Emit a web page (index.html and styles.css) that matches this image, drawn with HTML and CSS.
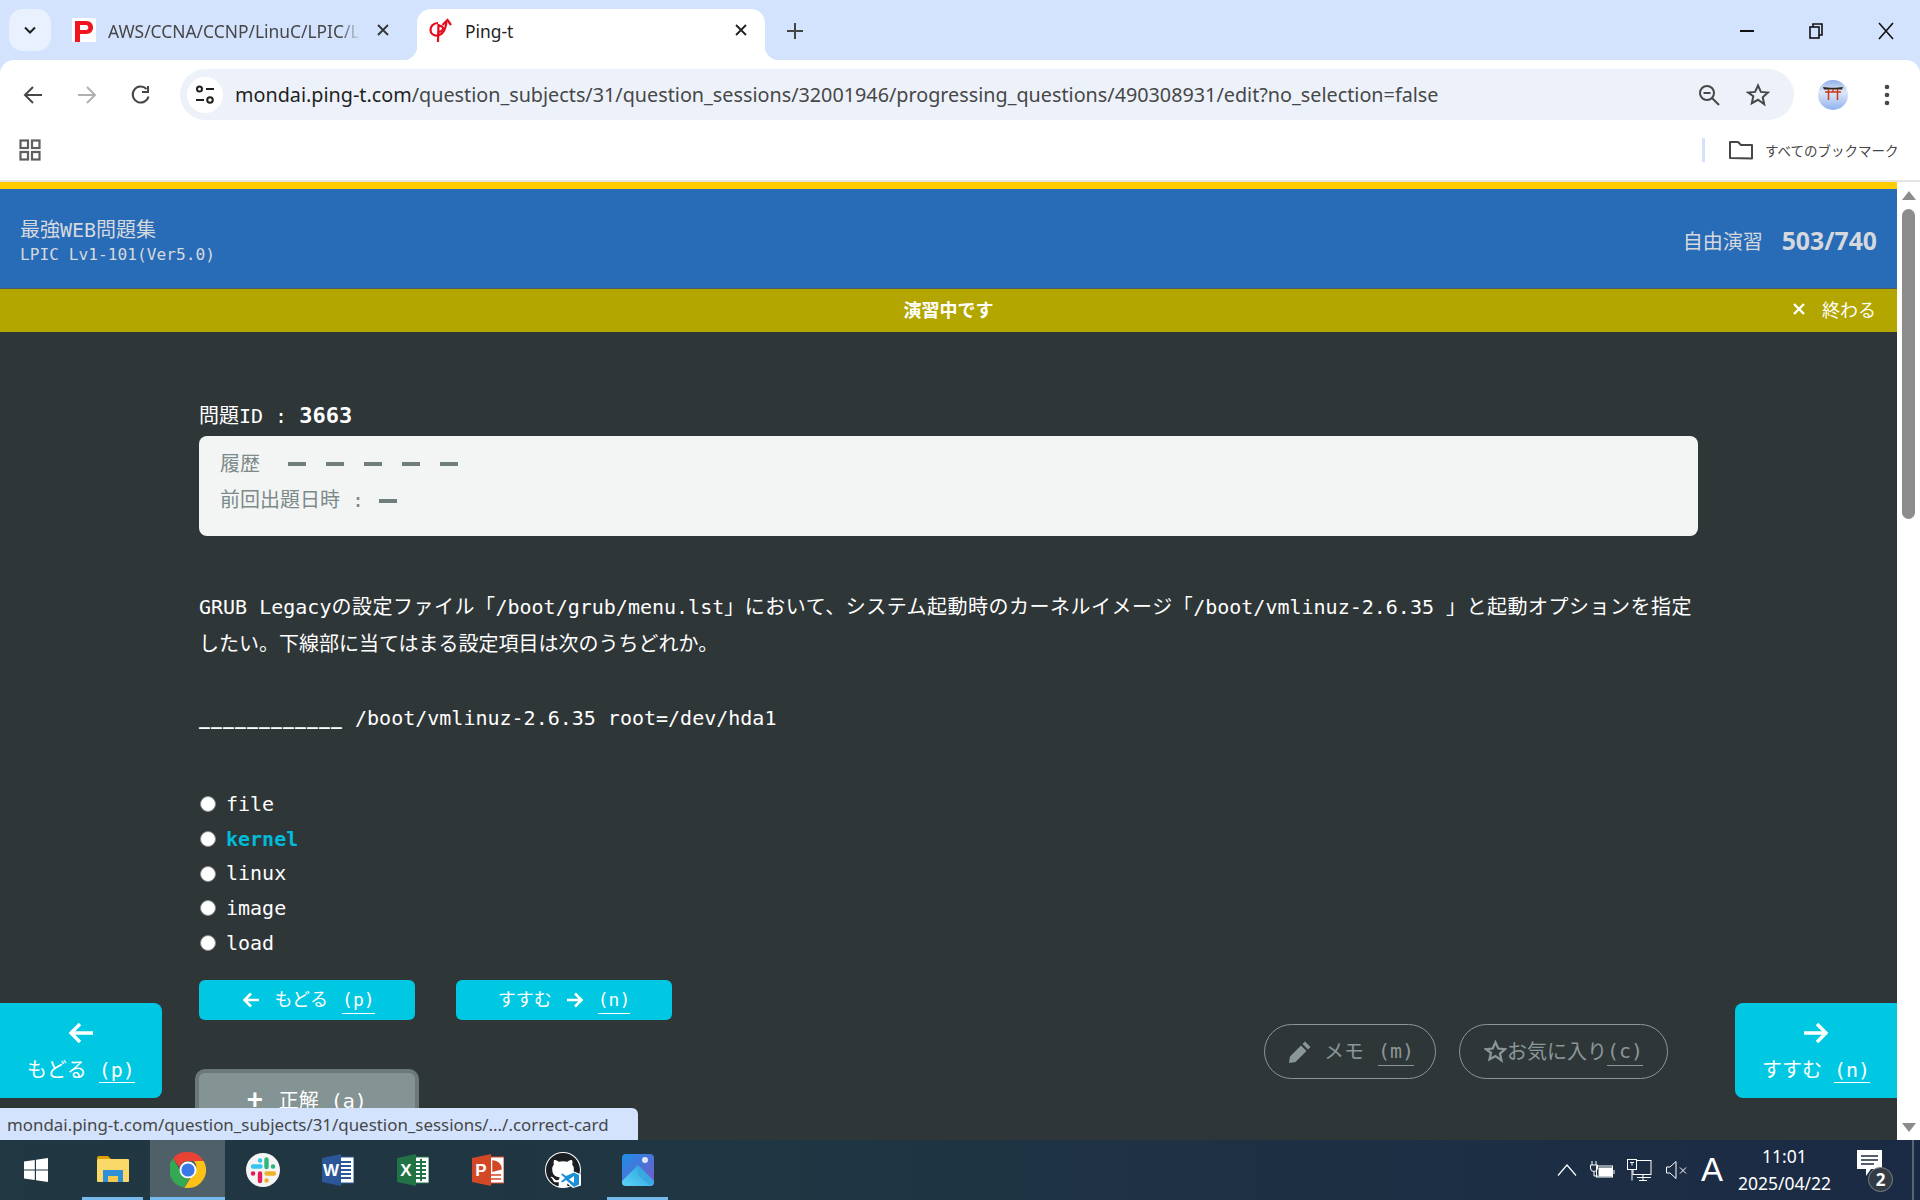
FILE: index.html
```html
<!DOCTYPE html>
<html lang="ja">
<head>
    <meta charset="utf-8">
    <title>Ping-t</title>
    <link rel="stylesheet" href="styles.css">
</head>
<body>
<div class="tabstrip">
    <div class="tab-menu">
        <svg width="16" height="16" viewBox="0 0 16 16"><path d="M3 5.500l5 5 5-5" fill="none" stroke="#1f1f1f" stroke-width="2"/></svg>
    </div>
    <div class="tab">
        <svg class="favicon" width="24" height="24" viewBox="0 0 24 24"><rect width="24" height="24" fill="#fff"/><path d="M3 3h11c5 0 7 3 7 6.500S19 16 14 16H8v8H3zM8 7v5h6c1.600 0 2.300-1.100 2.300-2.500S15.600 7 14 7z" fill="#f0141e"/></svg>
        <span class="tab-title fade">AWS/CCNA/CCNP/LinuC/LPIC/L</span>
        <svg class="tab-close" width="14" height="14" viewBox="0 0 14 14"><path d="M2 2l10 10M12 2L2 12" stroke="#333" stroke-width="1.800"/></svg>
    </div>
    <div class="tab active">
        <svg class="favicon" width="24" height="24" viewBox="0 0 24 24" fill="none" stroke="#e60e1e" stroke-width="2.200"><path d="M9 5C4 5 1.500 8.500 1.500 12c0 3.500 3 6 7 5.500 5-.5 8-5 9-14"/><path d="M13.500 7l5-5L22 7"/><path d="M9.500 6L9 24"/><path d="M9.500 8c3-.5 5 1 4.500 3-.5 2-3 3-4.500 2.500"/></svg>
        <span class="tab-title">Ping-t</span>
        <svg class="tab-close" width="14" height="14" viewBox="0 0 14 14"><path d="M2 2l10 10M12 2L2 12" stroke="#1f1f1f" stroke-width="1.800"/></svg>
    </div>
    <svg class="new-tab" width="18" height="18" viewBox="0 0 18 18"><path d="M9 1v16M1 9h16" stroke="#444" stroke-width="2"/></svg>
    <div class="window-controls">
        <svg width="16" height="16" viewBox="0 0 16 16"><path d="M1 8h14" stroke="#111" stroke-width="2"/></svg>
        <svg width="16" height="16" viewBox="0 0 16 16" fill="none" stroke="#111" stroke-width="1.600"><rect x="2" y="4" width="9" height="11"/><path d="M5 4V1h9v11h-3"/></svg>
        <svg width="18" height="18" viewBox="0 0 18 18"><path d="M2 1l14 16M16 1L2 17" stroke="#111" stroke-width="1.600"/></svg>
    </div>
</div>

<div class="toolbar">
    <svg class="nav-btn" width="22" height="22" viewBox="0 0 22 22" fill="none" stroke="#474747" stroke-width="2"><path d="M20 11H3M11 3l-8 8 8 8"/></svg>
    <svg class="nav-btn" width="22" height="22" viewBox="0 0 22 22" fill="none" stroke="#b0b0b0" stroke-width="2"><path d="M2 11h17M11 3l8 8-8 8"/></svg>
    <svg class="nav-btn" width="22" height="22" viewBox="0 0 22 22" fill="none" stroke="#474747" stroke-width="2"><path d="M18.500 12.500A8 8 0 1 1 16.500 5"/><path d="M18 2v6h-6" /></svg>
    <div class="address">
        <div class="site-info">
            <svg width="20" height="20" viewBox="0 0 20 20" fill="none" stroke="#1f1f1f" stroke-width="2"><circle cx="4.500" cy="4" r="2.500"/><path d="M11 4h8M1 15h8"/><circle cx="15" cy="15" r="2.800"/></svg>
        </div>
        <span class="url"><span class="host">mondai.ping-t.com</span>/question_subjects/31/question_sessions/32001946/progressing_questions/490308931/edit?no_selection=false</span>
        <svg class="addr-zoom" width="22" height="22" viewBox="0 0 22 22" fill="none" stroke="#474747" stroke-width="2"><circle cx="9" cy="9" r="7"/><path d="M5.500 9h7M14 14l7 7"/></svg>
        <svg class="addr-star" width="24" height="24" viewBox="0 0 24 24" fill="none" stroke="#474747" stroke-width="2"><path d="M12 2.500l2.900 6.400 7 .7-5.200 4.700 1.500 6.900L12 16.800l-6.200 3.400 1.500-6.900L2.100 9.600l7-.7z"/></svg>
    </div>
    <svg class="avatar" width="30" height="30" viewBox="0 0 30 30">
        <defs><linearGradient id="sky" x1="0" y1="0" x2="0" y2="1"><stop offset="0" stop-color="#8fb0e6"/><stop offset=".4" stop-color="#dfe8f7"/><stop offset="1" stop-color="#8fb2ee"/></linearGradient></defs>
        <circle cx="15" cy="15" r="15" fill="url(#sky)"/>
        <path d="M5 7c6 1 14 1 20 0l-1 2.500H6z" fill="#33251f"/>
        <path d="M7 12h16M10.500 9v11M19.500 9v11M15 9v3" stroke="#c63a1d" stroke-width="1.500"/>
    </svg>
    <svg class="menu-dots" width="6" height="22" viewBox="0 0 6 22" fill="#474747"><circle cx="3" cy="3" r="2.300"/><circle cx="3" cy="11" r="2.300"/><circle cx="3" cy="19" r="2.300"/></svg>
</div>

<div class="bookmarks">
    <svg width="22" height="22" viewBox="0 0 22 22" fill="none" stroke="#5f5f5f" stroke-width="2.200"><rect x="1.500" y="1.500" width="7.500" height="7.500"/><rect x="13" y="1.500" width="7.500" height="7.500"/><rect x="1.500" y="13" width="7.500" height="7.500"/><rect x="13" y="13" width="7.500" height="7.500"/></svg>
    <div class="bm-right">
        <span class="bm-divider"></span>
        <svg width="24" height="20" viewBox="0 0 24 20" fill="none" stroke="#474747" stroke-width="2"><path d="M1 18V2h8l3 3h11v13.500z" stroke-linejoin="round"/></svg>
        <span class="bm-label">すべてのブックマーク</span>
    </div>
</div>

<div class="page">
    <div class="site">
        <header class="site-header">
            <div>
                <div class="site-title">最強WEB問題集</div>
                <div class="site-sub">LPIC Lv1-101(Ver5.0)</div>
            </div>
            <div class="progress">
                <span class="progress-mode">自由演習</span>
                <span class="progress-count">503/740</span>
            </div>
        </header>
        <div class="notice">
            <span class="notice-text">演習中です</span>
            <span class="notice-end">
                <svg width="14" height="14" viewBox="0 0 14 14"><path d="M2 2l10 10M12 2L2 12" stroke="#fff" stroke-width="2.400"/></svg>
                終わる
            </span>
        </div>
        <main class="question">
            <div class="question-id">問題ID : <b>3663</b></div>
            <div class="history">
                <div class="history-row">履歴 <span class="history-marks"><i></i><i></i><i></i><i></i><i></i></span></div>
                <div class="history-row">前回出題日時 : <span class="history-marks"><i></i></span></div>
            </div>
            <p class="question-text">GRUB Legacy<span class="jp">の設定ファイル「</span>/boot/grub/menu.lst<span class="jp">」において、システム起動時のカーネルイメージ「</span>/boot/vmlinuz-2.6.35 <span class="jp">」と起動オプションを指定</span>したい。下線部に当てはまる設定項目は次のうちどれか。<br><br><span class="blank">____________</span> /boot/vmlinuz-2.6.35 root=/dev/hda1</p>
            <ul class="choices">
                <li><span class="radio"></span>file</li>
                <li class="is-answer"><span class="radio"></span>kernel</li>
                <li><span class="radio"></span>linux</li>
                <li><span class="radio"></span>image</li>
                <li><span class="radio"></span>load</li>
            </ul>
            <div class="pager">
                <a class="btn btn-prev">
                    <svg width="18" height="16" viewBox="0 0 18 16" fill="none" stroke="#fff" stroke-width="2.600"><path d="M17 8H3M9 1.500L2.500 8 9 14.500"/></svg>
                    <span class="btn-label">もどる</span><span class="key">(p)</span>
                </a>
                <a class="btn">
                    <span class="btn-label">すすむ</span>
                    <svg width="18" height="16" viewBox="0 0 18 16" fill="none" stroke="#fff" stroke-width="2.600"><path d="M1 8h14M9 1.500L15.500 8 9 14.500"/></svg>
                    <span class="key">(n)</span>
                </a>
            </div>
            <div class="correct-card"><span class="correct-plus">+</span>正解 <span>(a)</span></div>
        </main>
    </div>
    <div class="scrollbar">
        <span class="scroll-up"></span>
        <span class="scroll-thumb"></span>
        <span class="scroll-down"></span>
    </div>

    <a class="float-nav float-prev">
        <svg width="26" height="22" viewBox="0 0 26 22" fill="none" stroke="#fff" stroke-width="3.400"><path d="M25 11H4M12 2l-9 9 9 9"/></svg>
        <span class="float-label">もどる <span class="key">(p)</span></span>
    </a>
    <a class="float-nav float-next">
        <svg width="26" height="22" viewBox="0 0 26 22" fill="none" stroke="#fff" stroke-width="3.400"><path d="M1 11h21M14 2l9 9-9 9"/></svg>
        <span class="float-label">すすむ <span class="key">(n)</span></span>
    </a>
    <a class="pill pill-memo">
        <svg width="24" height="24" viewBox="0 0 24 24" fill="#8b9797"><path d="M17 1.500l5.500 5.500-2.500 2.500L14.500 4zM13 5.500L18.500 11 7.500 22 1 23l1-6.500z"/></svg>
        <span class="pill-text">メモ</span><span class="key">(m)</span>
    </a>
    <a class="pill pill-fav">
        <svg width="23" height="23" viewBox="0 0 24 24" fill="none" stroke="#8b9797" stroke-width="2.400"><path d="M12 2.500l2.900 6.400 7 .7-5.200 4.700 1.500 6.900L12 16.800l-6.200 3.400 1.500-6.900L2.100 9.600l7-.7z"/></svg>
        <span>お気に入り</span><span class="key">(c)</span>
    </a>
    <div class="status-bubble">mondai.ping-t.com/question_subjects/31/question_sessions/.../.correct-card</div>
</div>

<div class="taskbar">
    <div class="start">
        <svg width="24" height="24" viewBox="0 0 24 24" fill="#fff"><path d="M0 3.500l10.800-1.500v9.500H0zM12 1.800L24 0v11.500H12zM0 12.500h10.800V22L0 20.500zM12 12.500h12V24l-12-1.800z"/></svg>
    </div>
    <div class="task running">
        <svg width="32" height="28" viewBox="0 0 32 28"><path d="M0 2a2 2 0 0 1 2-2h9l3 3H0z" fill="#e0a000"/><rect y="3" width="32" height="23" rx="1" fill="#fbd968"/><path d="M6 14h20v12h-5v-6H11v6H6z" fill="#2f8fd8"/><rect x="11" y="20" width="10" height="6" fill="#f2c94c"/></svg>
    </div>
    <div class="task running active">
        <svg width="36" height="36" viewBox="0 0 36 36">
            <path d="M18 0a18 18 0 0 1 15.600 9H18a9 9 0 0 0-8.500 6L3 6.500A18 18 0 0 1 18 0z" fill="#ea4335"/>
            <path d="M3 6.500l7.700 13.200A9 9 0 0 0 19 27l-4.600 8.600A18 18 0 0 1 3 6.500z" fill="#34a853"/>
            <path d="M33.600 9A18 18 0 0 1 18 36h-3.600l8-13.500A9 9 0 0 0 24 9z" fill="#fbc116"/>
            <circle cx="18" cy="18" r="8.500" fill="#fff"/><circle cx="18" cy="18" r="6.600" fill="#3b78e7"/>
        </svg>
    </div>
    <div class="task">
        <svg width="34" height="34" viewBox="0 0 34 34">
            <circle cx="17" cy="17" r="17" fill="#f4f4f4"/>
            <g fill="none" stroke-linecap="round" stroke-width="4.400">
                <path d="M7 13.500h7.500M14 7.500h.1" stroke="#36c5f0"/>
                <path d="M20.500 6.500v7.500M27 13.500h.1" stroke="#2eb67d"/>
                <path d="M20.500 20.500H28M20.500 27.500h.1" stroke="#ecb22e"/>
                <path d="M14 20.500V28M7 20.500h.1" stroke="#e01e5a"/>
            </g>
        </svg>
    </div>
    <div class="task">
        <svg width="32" height="32" viewBox="0 0 32 32">
            <rect x="12" y="3" width="20" height="26" fill="#fff" stroke="#2b5797"/>
            <path d="M19 8h10M19 12h10M19 16h10M19 20h10M19 24h10" stroke="#2b5797" stroke-width="2"/>
            <path d="M0 4L19 0v32L0 28z" fill="#2b579a"/>
            <text x="9" y="22" class="office-letter">W</text>
        </svg>
    </div>
    <div class="task">
        <svg width="32" height="32" viewBox="0 0 32 32">
            <rect x="12" y="3" width="20" height="26" fill="#fff" stroke="#217346"/>
            <path d="M19 8h10M19 12h10M19 16h10M19 20h10M19 24h10M24 5v22" stroke="#217346" stroke-width="2"/>
            <path d="M0 4L19 0v32L0 28z" fill="#217346"/>
            <text x="9" y="22" class="office-letter">X</text>
        </svg>
    </div>
    <div class="task">
        <svg width="32" height="32" viewBox="0 0 32 32">
            <rect x="12" y="3" width="20" height="26" fill="#fff" stroke="#d24726"/>
            <path d="M21 17V7a8 8 0 0 1 8 8zM19 21h10M19 25h10" fill="#d24726" stroke="#d24726" stroke-width="1.500"/>
            <path d="M0 4L19 0v32L0 28z" fill="#d24726"/>
            <text x="9" y="22" class="office-letter">P</text>
        </svg>
    </div>
    <div class="task task-github">
        <svg width="36" height="36" viewBox="0 0 36 36">
            <circle cx="18" cy="18" r="18" fill="#fff"/>
            <path transform="translate(1 1) scale(2.125)" fill="#1b1f23" d="M8 0C3.580 0 0 3.580 0 8c0 3.540 2.290 6.530 5.470 7.590.4.070.55-.170.55-.380 0-.190-.010-.820-.010-1.490-2.010.370-2.530-.490-2.690-.940-.090-.230-.480-.940-.820-1.130-.280-.150-.680-.520-.010-.530.630-.010 1.080.580 1.230.820.720 1.210 1.870.870 2.330.660.070-.520.280-.870.510-1.070-1.780-.200-3.640-.890-3.640-3.950 0-.870.310-1.590.820-2.150-.080-.200-.360-1.020.080-2.120 0 0 .670-.210 2.200.820.640-.180 1.320-.270 2-.270.680 0 1.360.090 2 .270 1.530-1.040 2.200-.820 2.200-.820.440 1.100.160 1.920.080 2.120.510.560.820 1.270.820 2.150 0 3.070-1.870 3.750-3.650 3.950.290.250.540.730.540 1.480 0 1.070-.010 1.930-.010 2.200 0 .210.150.460.550.380A8.013 8.013 0 0 0 16 8c0-4.420-3.580-8-8-8z"/>
            <path d="M28 19l8 3.500v11L28 36 19 29l-3 2-3-2 5-4-5-4 3-2 3 2z" fill="#fff"/>
            <path d="M29 20.500l5 2.500v9.500l-5 2.500-8-7-3.500 2.500-1.500-1 4-3.500-4-3.500 1.500-1 3.500 2.500zM29 24l-5 3.500 5 3.500z" fill="#1b8fd8"/>
        </svg>
    </div>
    <div class="task running">
        <svg width="32" height="32" viewBox="0 0 32 32">
            <defs>
                <linearGradient id="photo" x1="0" y1="0" x2="1" y2="1"><stop offset="0" stop-color="#1c8fe8"/><stop offset="1" stop-color="#7a55c7"/></linearGradient>
                <linearGradient id="hill" x1="0" y1="1" x2="1" y2="0"><stop offset="0" stop-color="#5fd4f5"/><stop offset="1" stop-color="#1f9be0"/></linearGradient>
            </defs>
            <rect width="32" height="32" rx="4" fill="url(#photo)"/>
            <circle cx="23" cy="6" r="3" fill="#dfe7f5"/>
            <path d="M0 27L16 11l16 16v1a4 4 0 0 1-4 4H4a4 4 0 0 1-4-4z" fill="url(#hill)"/>
            <path d="M16 11l16 16v1l-4 4-12-11z" fill="#3ba3dc" opacity=".7"/>
        </svg>
    </div>
    <div class="tray">
        <svg width="20" height="12" viewBox="0 0 20 12" fill="none" stroke="#fff" stroke-width="1.200"><path d="M1 11.500L10 1l9 10.500"/></svg>
        <svg width="25" height="20" viewBox="0 0 25 20" fill="none" stroke="#fff"><path d="M2 1v4M6 1v4M.5 5h7v3a3.500 3.500 0 0 1-7 0zM4 12v4H8"/><rect x="6.500" y="6" width="16" height="11"/><rect x="9" y="8" width="13" height="8" fill="#fff"/><path d="M24 10v4"/></svg>
        <svg width="25" height="23" viewBox="0 0 25 23" fill="none" stroke="#fff"><rect x="6" y="1.500" width="18" height="14"/><rect x=".5" y=".5" width="9" height="10" fill="#1b2a44"/><path d="M3 3.500h4M5 3.500v3M5 10.500v11M10 18.500h14M16 16v5M12 21.500h8"/></svg>
        <svg width="22" height="18" viewBox="0 0 22 18" fill="none" stroke="#fff"><path d="M.5 6v6H4l6 5.500V.5L4 6zM14 6.500l6 6M20 6.500l-6 6"/></svg>
        <span class="tray-ime">A</span>
        <div class="clock"><span>11:01</span><span>2025/04/22</span></div>
        <div class="notify">
            <svg width="25" height="28" viewBox="0 0 25 28"><path d="M0 0h25v19H14l-5 7v-7H0z" fill="#fff"/><path d="M4 6h17M4 10h17M4 14h13" stroke="#1b2a44" stroke-width="1.400"/></svg>
            <span class="notify-badge">2</span>
        </div>
    </div>
</div>
</body>
</html>
```

FILE: styles.css
```css
* {
    box-sizing: border-box;
}

html, body {
    margin: 0;
    height: 1200px;
    overflow: hidden;
}

body {
    display: flex;
    flex-direction: column;
    background: #d3e3fd;
    font-family: "DejaVu Sans Mono", "Noto Sans CJK JP", monospace;
    color: #fff;
    text-spacing-trim: space-all;
}

/* browser chrome */
.tabstrip {
    height: 60px;
    flex: none;
    display: flex;
    align-items: flex-start;
    padding: 9px 0 0 9px;
    font-family: "Noto Sans", "Noto Sans CJK JP", sans-serif;
    color: #1f1f1f;
}

.tab-menu {
    width: 42px;
    height: 42px;
    border-radius: 14px;
    background: #e9f0fe;
    display: flex;
    align-items: center;
    justify-content: center;
}

.tab {
    height: 51px;
    display: flex;
    align-items: flex-start;
    padding-top: 9px;
    position: relative;
}

.tab:not(.active) {
    width: 366px;
    padding-left: 21px;
    color: #474747;
}

.tab.active {
    width: 348px;
    padding-left: 12px;
    background: #fff;
    border-radius: 14px 14px 0 0;
}

.tab.active::before,
.tab.active::after {
    content: "";
    position: absolute;
    bottom: 0;
    width: 14px;
    height: 14px;
}

.tab.active::before {
    left: -14px;
    background: radial-gradient(circle at 0 0, #d3e3fd 14px, #fff 14.500px);
}

.tab.active::after {
    right: -14px;
    background: radial-gradient(circle at 100% 0, #d3e3fd 14px, #fff 14.500px);
}

.favicon {
    flex: none;
}

.tab-title {
    margin-left: 12px;
    font-size: 17.400px;
    line-height: 26px;
    white-space: nowrap;
}

.tab-title.fade {
    -webkit-mask-image: linear-gradient(to right, #000 92%, transparent);
    mask-image: linear-gradient(to right, #000 92%, transparent);
}

.tab-close {
    margin-top: 5px;
    margin-left: auto;
    margin-right: 27px;
    flex: none;
}

.tab.active .tab-close {
    margin-right: 17px;
}

.new-tab {
    margin: 13px 0 0 21px;
    flex: none;
}

.window-controls {
    margin-left: auto;
    margin-top: 13px;
    padding-right: 25px;
    display: flex;
    align-items: center;
    gap: 53px;
    flex: none;
}

.toolbar {
    height: 60px;
    flex: none;
    display: flex;
    align-items: flex-end;
    background: #fff;
    border-radius: 14px 14px 0 0;
    padding-left: 22px;
}

.nav-btn {
    margin-right: 32px;
    margin-bottom: 14px;
    flex: none;
}

.toolbar .nav-btn:nth-child(3) {
    margin-right: 28px;
}

.address {
    width: 1614px;
    height: 51px;
    border-radius: 26px;
    background: #edf2fa;
    display: flex;
    align-items: center;
    padding-left: 7px;
    flex: none;
    font-family: "Noto Sans", sans-serif;
    font-size: 19.780px;
    color: #474747;
}

.site-info {
    width: 36px;
    height: 36px;
    border-radius: 50%;
    background: #fff;
    display: flex;
    align-items: center;
    justify-content: center;
    flex: none;
}

.url {
    margin-left: 12px;
    white-space: nowrap;
}

.host {
    color: #1f1f1f;
}

.addr-zoom {
    margin-left: auto;
    flex: none;
}

.addr-star {
    margin: 0 24px 0 26px;
    flex: none;
}

.avatar {
    margin: 0 0 10px 24px;
    flex: none;
}

.menu-dots {
    margin: 0 0 14px 36px;
    flex: none;
}

.bookmarks {
    height: 62px;
    flex: none;
    background: #fff;
    display: flex;
    align-items: center;
    justify-content: space-between;
    padding-left: 19px;
    border-bottom: 2px solid #e4e4e4;
}

.bm-right {
    display: flex;
    align-items: center;
    width: 218px;
}

.bm-divider {
    width: 3px;
    height: 24px;
    background: #d3e3fd;
    margin-right: 24px;
}

.bm-label {
    margin-left: 12px;
    font: 13.500px "Noto Sans CJK JP", sans-serif;
    color: #474747;
    white-space: nowrap;
}

/* page area */
.page {
    flex: none;
    height: 958px;
    display: flex;
    position: relative;
    overflow: hidden;
    background: #fff;
}

.site {
    flex: 1;
    min-width: 0;
    background: #2f3638;
}

.site-header {
    height: 107px;
    padding: 5px 20px 0;
    border-top: 7px solid #ffcc00;
    border-bottom: 1px solid #4a5a66;
    background: #286bb7;
    display: flex;
    align-items: center;
    justify-content: space-between;
    color: #d5d9de;
}

.site-title {
    font-size: 20px;
    line-height: 28px;
}

.site-sub {
    font-size: 16.200px;
    line-height: 22px;
}

.progress {
    display: flex;
    align-items: center;
    gap: 19px;
    margin-bottom: 2px;
}

.progress-mode {
    font-size: 20px;
}

.progress-count {
    font: bold 24.800px "Open Sans", sans-serif;
}

.notice {
    height: 43px;
    padding-bottom: 3px;
    background: #b3a600;
    display: flex;
    align-items: center;
    justify-content: center;
    position: relative;
}

.notice-text {
    font-size: 18px;
    font-weight: bold;
}

.notice-end {
    position: absolute;
    right: 21px;
    top: 0;
    height: 40px;
    display: flex;
    align-items: center;
    gap: 16px;
    font-size: 18px;
}

.question {
    padding: 65px 199px 0;
    font-size: 20px;
    line-height: 37px;
}

.question-id b {
    font-size: 22px;
}

.history {
    margin-top: 1px;
    height: 100px;
    padding: 10px 21px 0;
    border-radius: 8px;
    background: #f3f5f4;
    color: #7c8a8a;
    font-size: 20px;
}

.history-row {
    display: flex;
    align-items: center;
    gap: 12px;
    height: 36.500px;
}

.history-marks {
    display: flex;
    gap: 20px;
    margin-left: 16px;
}

.history-row + .history-row .history-marks {
    margin-left: 3px;
}

.history-marks i {
    width: 18px;
    height: 4px;
    background: #6f7d7d;
}

.question-text {
    margin: 53px 0 0;
}

.jp {
    letter-spacing: 0.500px;
}

.blank {
    font-size: 18px;
    font-weight: bold;
    letter-spacing: 1.160px;
}

.choices {
    list-style: none;
    margin: 50px 0 0;
    padding: 0;
}

.choices li {
    height: 34.700px;
    display: flex;
    align-items: center;
}

.radio {
    width: 16px;
    height: 16px;
    margin: 0 10px 0 1px;
    border-radius: 50%;
    background: #fff;
    border: 1px solid #8a8a8a;
}

.is-answer {
    color: #00bcd9;
    font-weight: bold;
}

.pager {
    margin-top: 20px;
    display: flex;
    gap: 41px;
}

.btn {
    width: 216px;
    height: 40px;
    border-radius: 6px;
    background: #00c8e3;
    display: flex;
    align-items: center;
    justify-content: center;
    gap: 14px;
    font-size: 18px;
    line-height: 26px;
}

.btn-prev {
    padding-left: 3px;
}

.key {
    border-bottom: 1px solid currentColor;
}

.correct-card {
    margin: 49px 0 0 -4px;
    width: 224px;
    height: 66px;
    padding-top: 8px;
    border: 4px solid #6c7979;
    border-radius: 10px;
    background: #849393;
    text-align: center;
    font-size: 20px;
}

.correct-plus {
    margin-right: 16px;
    font-size: 26px;
    font-weight: bold;
}

.scrollbar {
    width: 23px;
    flex: none;
    display: flex;
    flex-direction: column;
    align-items: center;
}

.scroll-up {
    margin-top: 9px;
    border: 7px solid transparent;
    border-top: 0;
    border-bottom: 9px solid #8c8c8c;
}

.scroll-thumb {
    width: 13px;
    height: 310px;
    margin-top: 9px;
    border-radius: 7px;
    background: #8c8c8c;
}

.scroll-down {
    margin-top: auto;
    margin-bottom: 8px;
    border: 7px solid transparent;
    border-bottom: 0;
    border-top: 9px solid #8c8c8c;
}

/* fixed overlays */
.float-nav {
    position: absolute;
    top: 821px;
    width: 162px;
    height: 95px;
    background: #00c8e3;
    display: flex;
    flex-direction: column;
    align-items: center;
    padding-top: 19px;
    gap: 12px;
    font-size: 20px;
}

.float-prev {
    left: 0;
    border-radius: 0 8px 8px 0;
}

.float-next {
    left: 1735px;
    border-radius: 8px 0 0 8px;
}

.float-label {
    line-height: 28px;
    white-space: nowrap;
}

.pill {
    position: absolute;
    top: 842px;
    height: 55px;
    border: 1px solid #8b9797;
    border-radius: 28px;
    display: flex;
    align-items: center;
    color: #8b9797;
    font-size: 20px;
    line-height: 28px;
}

.pill-memo {
    left: 1264px;
    width: 172px;
    padding-left: 23px;
}

.pill-text {
    margin: 0 14px 0 12px;
}

.pill-fav {
    left: 1459px;
    width: 209px;
    padding-left: 24px;
}

.status-bubble {
    position: absolute;
    left: 0;
    bottom: 0;
    width: 638px;
    height: 32px;
    padding: 2px 0 0 7px;
    border-radius: 0 6px 0 0;
    background: #d3e3fd;
    color: #474747;
    font: 16.900px/30px "Noto Sans", sans-serif;
    white-space: nowrap;
}

/* windows taskbar */
.taskbar {
    height: 60px;
    flex: none;
    display: flex;
    background: linear-gradient(to right, #213742, #1f3643 40%, #1b2a44);
}

.start {
    width: 75px;
    display: flex;
    align-items: center;
    justify-content: center;
    padding-right: 3px;
}

.task {
    width: 75px;
    display: flex;
    align-items: center;
    justify-content: center;
    position: relative;
}

.task.active {
    background: #4f6068;
}

.task.running::after {
    content: "";
    position: absolute;
    left: 7px;
    right: 7px;
    bottom: 0;
    height: 3px;
    background: #76b9ed;
}

.task.active::after {
    left: 0;
    right: 0;
}

.office-letter {
    font: bold 17px "Liberation Sans", sans-serif;
    fill: #fff;
    text-anchor: middle;
}

.tray {
    margin-left: auto;
    margin-right: 6px;
    display: flex;
    align-items: center;
    padding-right: 19px;
    border-right: 2px solid #5a6472;
}

.tray svg {
    flex: none;
}

.tray > svg:nth-child(1) {
    margin-right: 13px;
}

.tray > svg:nth-child(2) {
    margin-right: 12.500px;
}

.tray > svg:nth-child(3) {
    margin-right: 13.500px;
}

.tray-ime {
    margin-left: 13px;
    font: 33px "Liberation Sans", sans-serif;
}

.clock {
    margin-left: 15px;
    display: flex;
    flex-direction: column;
    align-items: center;
    font: 17.500px/27px "Noto Sans", sans-serif;
}

.notify {
    margin-left: 26px;
    width: 36px;
    height: 40px;
    position: relative;
}

.notify-badge {
    position: absolute;
    left: 11px;
    top: 17px;
    width: 25px;
    height: 25px;
    border-radius: 50%;
    background: #333b45;
    border: 1px solid #7b8088;
    font: bold 17px/23px "Noto Sans", sans-serif;
    text-align: center;
}
```
